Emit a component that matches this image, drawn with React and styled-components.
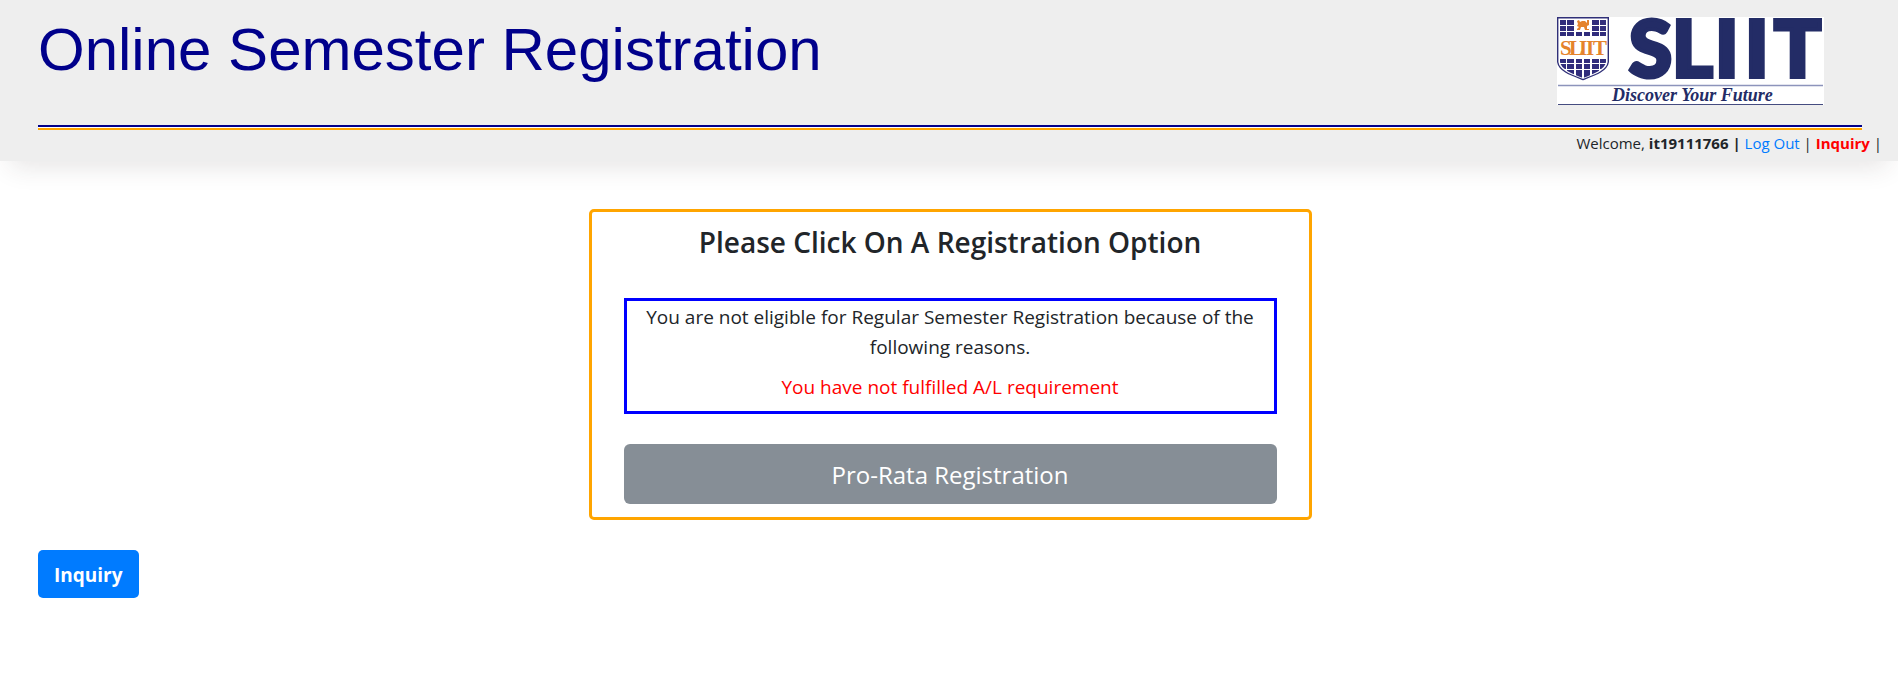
import React from "react";
import styled, { createGlobalStyle, css } from "styled-components";

const GlobalStyle = createGlobalStyle`
  *, *::before, *::after { box-sizing: border-box; }
  body {
    margin: 0;
    background: #fff;
    color: #212529;
    font-family: "Segoe UI", "Open Sans", "Noto Sans", sans-serif;
    font-size: 19px;
    line-height: 30px;
  }
  h1, h2, p { margin: 0; font-weight: inherit; }
`;

const Header = styled.header`
  background: #eee;
  box-shadow: 0 16px 24px -10px rgba(60, 40, 40, 0.12);
`;

const Banner = styled.div`
  display: flex;
  justify-content: space-between;
  align-items: flex-start;
  height: 125px;
  margin: 0 36px 0 38px;
  padding: 17px 38px 0 0;
`;

const SiteTitle = styled.h1`
  color: darkblue;
  font-family: Arial, "Liberation Sans", sans-serif;
  font-size: 60px;
  line-height: 66px;
`;

const Logo = styled.svg`
  display: block;
  flex: none;
  background: #fff;
`;

const Rule = styled.div`
  height: 5px;
  margin: 0 36px 0 38px;
  border-top: 2px solid darkblue;
  border-bottom: 2px solid orange;
  background: #fff;
`;

const UserBar = styled.nav`
  padding: 1px 16px 6px;
  font-size: 15px;
  line-height: 24px;
  text-align: right;
`;

const NavLink = styled.a`
  text-decoration: none;
  color: ${(p) => (p.$alert ? "red" : "#007bff")};
  font-weight: ${(p) => (p.$alert ? 700 : 400)};
`;

const Main = styled.main`
  padding: 48px 36px 0 38px;
`;

const Panel = styled.section`
  display: flex;
  flex-direction: column;
  gap: 30px;
  max-width: 723px;
  margin: 0 auto 30px;
  padding: 13px 32px;
  border: 3px solid orange;
  border-radius: 5px;
  text-align: center;
`;

const PanelTitle = styled.h2`
  padding-bottom: 9px;
  font-size: 28px;
  font-weight: 600;
  line-height: 34px;
`;

const Notice = styled.div`
  display: flex;
  flex-direction: column;
  gap: 10px;
  padding: 1px 16px 9px;
  border: 3px solid blue;
`;

const Reason = styled.p`
  color: red;
`;

const Button = styled.button`
  display: block;
  border: 0;
  color: #fff;
  font-family: inherit;
  cursor: pointer;
  ${(p) =>
    p.$wide
      ? css`
          width: 100%;
          padding: 13px 20px 11px;
          border-radius: 6px;
          background: #868e96;
          font-size: 24px;
          line-height: 36px;
        `
      : css`
          padding: 10px 16px 8px;
          border-radius: 5px;
          background: #007bff;
          font-size: 19px;
          font-weight: 700;
          line-height: 30px;
        `}
`;

const NAVY = "#232c66";
const columns = [
  [3, 6],
  [10, 7],
  [19, 6],
  [27, 6],
  [35, 7],
  [43, 6],
];
const rows = [
  [3, 5],
  [9, 5],
  [15, 4],
  [42, 4],
  [47, 5],
  [53, 9],
];

function SliitLogo() {
  return (
    <Logo width="267" height="88" viewBox="0 0 267 88" role="img" aria-label="SLIIT">
      <defs>
        <clipPath id="shield">
          <path d="M3 3H49V45C48 52 37 57 26 61C15 57 4 52 3 45Z" />
        </clipPath>
      </defs>
      <path d="M.7 .7H51.3V45C50 54 38 58 26 62.5C14 58 2 54 .7 45Z" fill="#fff" stroke="#2f2f78" strokeWidth="1.4" />
      <g clipPath="url(#shield)" fill="#302c7c">
        {rows.map(([y, h], r) =>
          columns.map(([x, w], c) =>
            r < 2 && (c === 2 || c === 3) ? null : <rect key={`${r}-${c}`} x={x} y={y} width={w} height={h} />
          )
        )}
      </g>
      <path
        d="M20 4L22 3L23 5L25 4H28L30 6V3H32L32 8L30 9V12H32V13H28L27 10H24L23 13H20V12L22 10L20 9L21 7Z"
        fill="#e5832c"
      />
      <text x="3 12 22 29 36" y="38" fill="#e5832c" fontFamily="Liberation Serif, serif" fontSize="21" fontWeight="700">
        SLIIT
      </text>
      <text
        x="72 115 158 188 217"
        y="60"
        fill={NAVY}
        stroke={NAVY}
        strokeWidth="4"
        fontFamily="Lato, sans-serif"
        fontSize="78"
        fontWeight="900"
      >
        SLIIT
      </text>
      <path d="M1 68.5H266" stroke="#8d94bb" strokeWidth="1.5" />
      <path d="M1 87.5H266" stroke="#454c80" />
      <text x="55" y="84" fill={NAVY} fontFamily="Liberation Serif, serif" fontSize="18" fontStyle="italic" fontWeight="700">
        Discover Your Future
      </text>
    </Logo>
  );
}

export default function App() {
  return (
    <>
      <GlobalStyle />
      <Header>
        <Banner>
          <SiteTitle>Online Semester Registration</SiteTitle>
          <SliitLogo />
        </Banner>
        <Rule />
        <UserBar>
          Welcome, <b>it19111766 | </b>
          <NavLink href="#logout">Log Out</NavLink> |{" "}
          <NavLink href="#inquiry" $alert>
            Inquiry
          </NavLink>{" "}
          |
        </UserBar>
      </Header>
      <Main>
        <Panel>
          <PanelTitle>Please Click On A Registration Option</PanelTitle>
          <Notice>
            <p>You are not eligible for Regular Semester Registration because of the following reasons.</p>
            <Reason>You have not fulfilled A/L requirement</Reason>
          </Notice>
          <Button type="button" $wide>
            Pro-Rata Registration
          </Button>
        </Panel>
        <Button type="button">Inquiry</Button>
      </Main>
    </>
  );
}
